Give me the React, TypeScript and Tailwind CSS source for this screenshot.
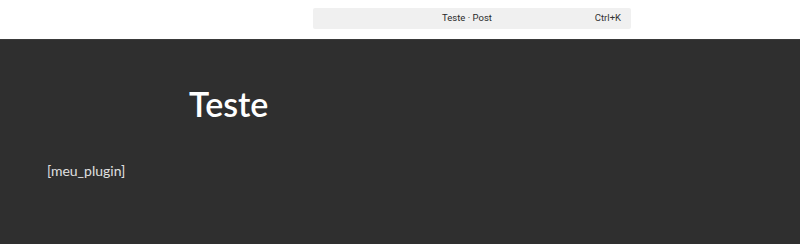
import React from 'react';

export default function App() {
  return (
    <div className="w-[800px] h-[244px] flex flex-col bg-[#2f2f2f] overflow-hidden" style={{ fontFamily: 'Roboto, "Liberation Sans", sans-serif' }}>
      <div className="h-[40px] bg-white border-b border-[#3a3a3a] flex items-start pt-[8px] pl-[313px]">
        <div className="w-[318px] h-[21px] bg-[#f0f0f0] rounded-[2px] flex items-center relative">
          <span className="absolute left-0 right-[10px] text-center text-[9.5px] text-[#2a2a2a]">Teste · Post</span>
          <span className="ml-auto mr-[10px] text-[9.5px] text-[#333]">Ctrl+K</span>
        </div>
      </div>

      <div className="flex-1 flex flex-col">
        <h1 className="pl-[189px] pt-[42px] text-[34px] leading-[44px] font-semibold text-white" style={{ fontFamily: 'Lato, sans-serif' }}>
          Teste
        </h1>
        <p className="pl-[47px] mt-[35px] text-[14px] leading-[20px] text-[#e0e0e0]" style={{ fontFamily: 'Lato, sans-serif' }}>
          [meu_plugin]
        </p>
      </div>
    </div>
  );
}
